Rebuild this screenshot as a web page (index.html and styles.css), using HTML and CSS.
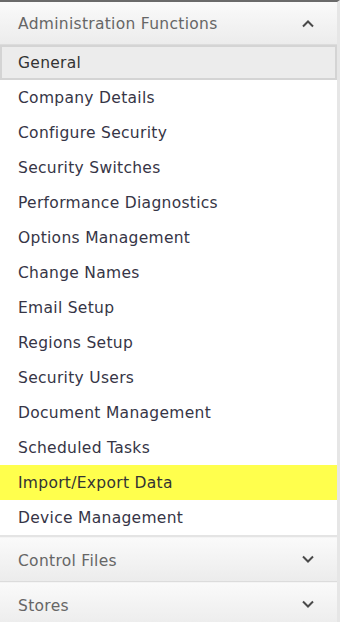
FILE: index.html
```html
<!DOCTYPE html>
<html lang="en">
<head>
    <meta charset="UTF-8">
    <meta name="viewport" content="width=device-width, initial-scale=1.0">
    <title>Administration Functions</title>
    <link rel="stylesheet" href="styles.css">
</head>
<body>
    <div class="panel">
        <div class="section open">
            <div class="section-head">
                <span>Administration Functions</span>
                <svg class="chev" width="14" height="9" viewBox="0 0 14 9"><path d="M2 7.5 L7 2.5 L12 7.5" fill="none" stroke="#4a4a4a" stroke-width="2"/></svg>
            </div>
            <ul class="menu">
                <li class="selected">General</li>
                <li>Company Details</li>
                <li>Configure Security</li>
                <li>Security Switches</li>
                <li>Performance Diagnostics</li>
                <li>Options Management</li>
                <li>Change Names</li>
                <li>Email Setup</li>
                <li>Regions Setup</li>
                <li>Security Users</li>
                <li>Document Management</li>
                <li>Scheduled Tasks</li>
                <li class="highlight">Import/Export Data</li>
                <li>Device Management</li>
            </ul>
        </div>
        <div class="section">
            <div class="section-head">
                <span>Control Files</span>
                <svg class="chev" width="14" height="9" viewBox="0 0 14 9"><path d="M2 1.5 L7 6.5 L12 1.5" fill="none" stroke="#4a4a4a" stroke-width="2"/></svg>
            </div>
        </div>
        <div class="section">
            <div class="section-head">
                <span>Stores</span>
                <svg class="chev" width="14" height="9" viewBox="0 0 14 9"><path d="M2 1.5 L7 6.5 L12 1.5" fill="none" stroke="#4a4a4a" stroke-width="2"/></svg>
            </div>
        </div>
    </div>
</body>
</html>
```

FILE: styles.css
```css
body {
    margin: 0;
    padding: 0;
    background: #fff;
    font-family: "DejaVu Sans", Verdana, sans-serif;
    font-size: 15.5px;
    letter-spacing: 0.3px;
}
* {
    box-sizing: border-box;
}
.panel {
    width: 340px;
    border-top: 2px solid #6a6a6a;
    border-right: 3px solid #e6e6e6;
    height: 622px;
    overflow: hidden;
}
.section-head {
    height: 43px;
    display: flex;
    align-items: center;
    justify-content: space-between;
    padding: 2px 22px 0 18px;
    color: #666;
    background: linear-gradient(#fafafa, #ececec);
    border-bottom: 1px solid #dcdcdc;
}
.section-head .chev {
    margin-top: -2px;
}
.section + .section .section-head {
    height: 45px;
    border-top: 1px solid #f4f4f4;
}
.menu {
    list-style: none;
    margin: 0;
    padding: 0;
    border-bottom: 2px solid #e4e4e4;
}
.menu li {
    height: 35px;
    padding: 2px 0 0 18px;
    line-height: 33px;
    color: #363546;
}
.menu li.selected {
    background: #ececec;
    box-shadow: inset 0 0 0 2px #d4d4d4;
    color: #333;
}
.menu li.highlight {
    background: #ffff4d;
    color: #333;
}
```
